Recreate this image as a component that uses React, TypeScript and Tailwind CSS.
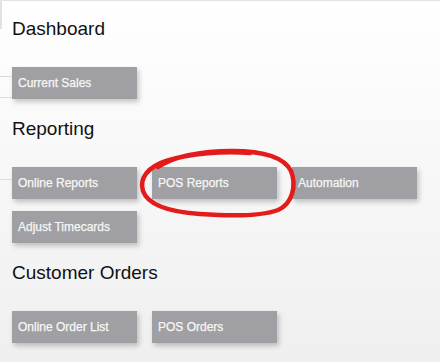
import React from 'react';

type Section = { title: string; items: string[] };

const sections: Section[] = [
  { title: 'Dashboard', items: ['Current Sales'] },
  { title: 'Reporting', items: ['Online Reports', 'POS Reports', 'Automation', 'Adjust Timecards'] },
  { title: 'Customer Orders', items: ['Online Order List', 'POS Orders'] },
];

const TileButton: React.FC<{ label: string }> = ({ label }) => (
  <div className="w-[125px] h-8 flex items-center px-[6px] bg-[#a0a0a4] text-[#f7f7f7] text-[12px] [-webkit-text-stroke:0.25px_#f7f7f7] shadow-[2px_3px_5px_rgba(0,0,0,0.22)] cursor-pointer">
    {label}
  </div>
);

const App: React.FC = () => {
  return (
    <div
      className="relative w-[440px] h-[362px] overflow-hidden border-t border-[#e4e4e4] bg-gradient-to-b from-[#ffffff] to-[#efefef] pl-3 pt-[17px]"
      style={{ fontFamily: '"Liberation Sans", Arial, sans-serif' }}
    >
      {/* leftover edge of the panel behind */}
      <div className="absolute left-0 top-0 w-[2px] h-[28px] bg-[#e2e2e2]" />
      <div className="absolute left-0 top-[75px] w-[12px] h-px bg-[#d8d8d8]" />
      <div className="absolute left-0 top-[96px] w-[12px] h-px bg-[#dcdcdc]" />
      <div className="absolute left-0 top-[178px] w-[12px] h-px bg-[#dcdcdc]" />

      {sections.map((s) => (
        <div key={s.title} className="mb-[19px]">
          <h2 className="text-[19px] leading-[22px] text-[#111] mb-[27px]">{s.title}</h2>
          <div className="flex flex-wrap gap-x-[15px] gap-y-3 w-[420px]">
            {s.items.map((it) => (
              <TileButton key={it} label={it} />
            ))}
          </div>
        </div>
      ))}

      {/* hand-drawn red circle around POS Reports */}
      <svg className="absolute left-0 top-0 pointer-events-none" width="440" height="362" viewBox="0 0 440 362">
        <path
          d="M158 166 C 172 156, 200 150, 232 150 C 262 150, 284 156, 291 170 C 297 185, 292 203, 278 209 C 262 215, 228 215, 200 213 C 170 211, 148 204, 143 190 C 139 177, 148 166, 166 160 C 190 152, 225 150, 250 152"
          fill="none"
          stroke="#e41b1b"
          strokeWidth="4.5"
          strokeLinecap="round"
        />
      </svg>
    </div>
  );
};

export default App;
